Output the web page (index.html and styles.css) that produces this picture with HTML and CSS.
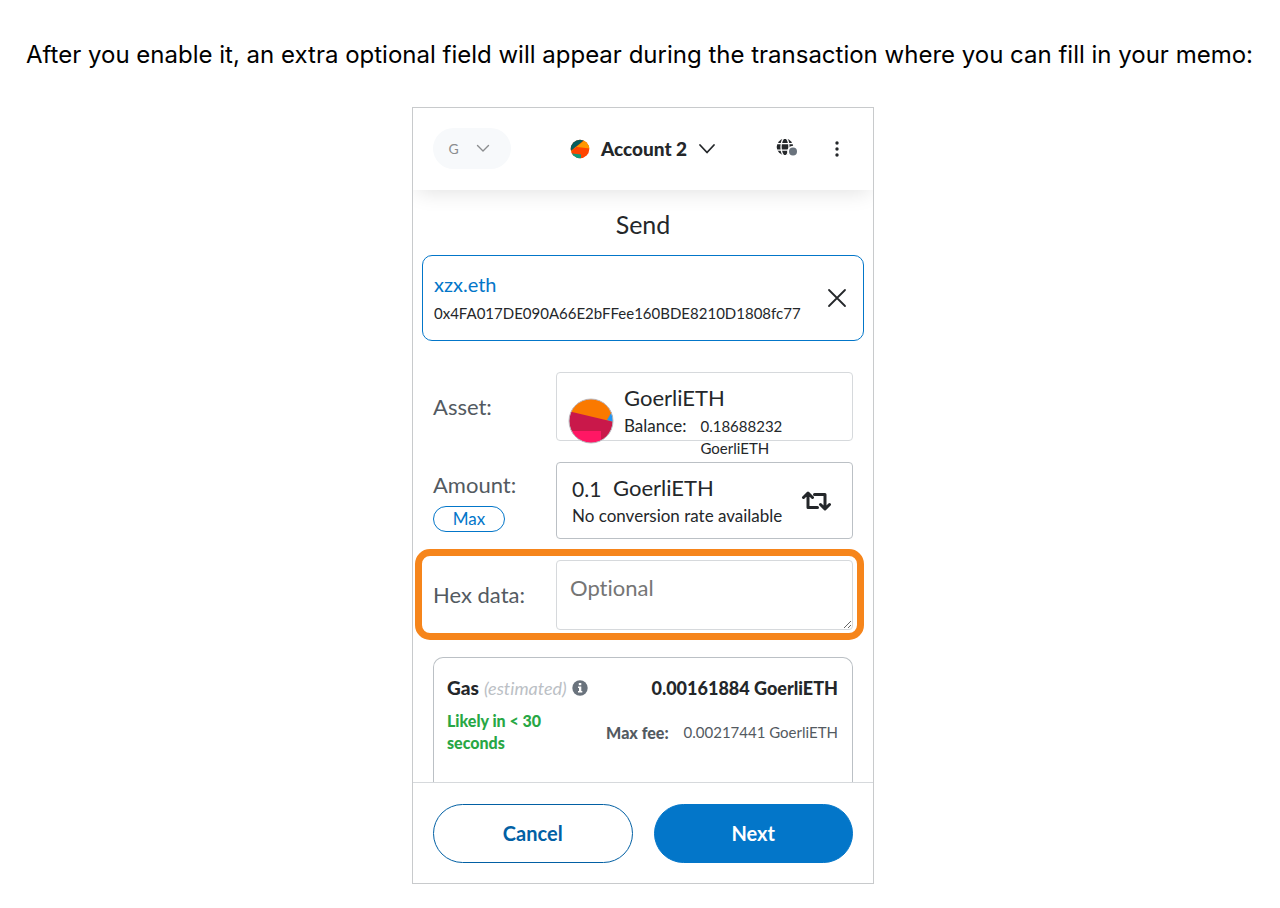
FILE: index.html
```html
<!DOCTYPE html>
<html lang="en">
<head>
<meta charset="utf-8">
<meta name="viewport" content="width=device-width, initial-scale=1">
<title>Send transaction</title>
<link rel="stylesheet" href="styles.css">
</head>
<body>
<main class="page">
  <p class="caption">After you enable it, an extra optional field will appear during the transaction where you can fill in your memo:</p>
  <section class="wallet">
    <header class="topbar">
      <button class="network" type="button" aria-label="Network G"><span>G</span>
        <svg width="14" height="9" viewBox="0 0 14 9" fill="none" stroke="currentColor" stroke-width="1.4" stroke-linecap="round" stroke-linejoin="round"><path d="M1.5 1.5 7 7l5.500-5.500"/></svg>
      </button>
      <button class="account" type="button">
        <svg width="20" height="20" viewBox="0 0 20 20"><defs><clipPath id="avatar"><circle cx="10" cy="10" r="9.300"/></clipPath></defs><g clip-path="url(#avatar)"><path fill="#ff4500" d="M0 0h20v20H0z"/><path fill="#ff9800" d="M0 13 16 0h4v9.500L5 7.800 0 15z"/><path fill="#075e5d" d="M0 0h15.500L0 12.500z"/><path fill="#109b7c" d="m2 14.500 9 1V20H2z"/></g></svg>
        <span>Account 2</span>
        <svg width="18" height="12" viewBox="0 0 18 12" fill="none" stroke="currentColor" stroke-width="1.800" stroke-linecap="round" stroke-linejoin="round"><path d="m2 2 7 7.500L16 2"/></svg>
      </button>
      <div class="actions">
        <button class="icon-button" type="button" aria-label="Connection status">
          <svg width="22" height="20" viewBox="0 0 22 20"><circle cx="9" cy="8" r="8.300" fill="#24272a"/><g fill="none" stroke="#fff" stroke-width="1.300"><ellipse cx="9" cy="8" rx="4" ry="9"/><path d="M0 4.600h18M0 11.200h18"/></g><circle cx="17" cy="12.500" r="5.800" fill="#fff"/><circle cx="17" cy="12.500" r="4" fill="#6a737d"/></svg>
        </button>
        <button class="icon-button" type="button" aria-label="Account options">
          <svg width="6" height="18" viewBox="0 0 6 18" fill="#24272a"><circle cx="3" cy="3" r="1.700"/><circle cx="3" cy="9" r="1.700"/><circle cx="3" cy="15" r="1.700"/></svg>
        </button>
      </div>
    </header>

    <form class="send">
      <h1 class="title">Send</h1>
      <div class="recipient">
        <div class="recipient-text">
          <span class="ens">xzx.eth</span>
          <span class="address">0x4FA017DE090A66E2bFFee160BDE8210D1808fc77</span>
        </div>
        <button class="icon-button" type="button" aria-label="Clear recipient">
          <svg width="20" height="20" viewBox="0 0 20 20" fill="none" stroke="#24272a" stroke-width="1.800" stroke-linecap="round"><path d="m2 2 16 16M18 2 2 18"/></svg>
        </button>
      </div>

      <div class="row asset-row">
        <span class="label">Asset:</span>
        <div class="field asset">
          <svg class="token" width="46" height="46" viewBox="0 0 46 46"><defs><clipPath id="token"><circle cx="23" cy="23" r="22"/></clipPath></defs><g clip-path="url(#token)"><path fill="#c9184a" d="M0 0h46v46H0z"/><path fill="#fa7900" d="M0 0h46v24L0 13z"/><path fill="#2196f3" d="m39 22 7-12v14z"/><path fill="#ff1764" d="M0 33h33v13H0z"/></g><circle cx="23" cy="23" r="22" fill="none" stroke="#bbc0c5"/></svg>
          <div class="asset-text">
            <span class="value">GoerliETH</span>
            <div class="balance"><span class="balance-label">Balance:</span><span>0.18688232 GoerliETH</span></div>
          </div>
        </div>
      </div>

      <div class="row amount-row">
        <div class="label-stack">
          <label class="label" for="amount">Amount:</label>
          <button class="max" type="button">Max</button>
        </div>
        <div class="field amount">
          <div class="amount-text">
            <div class="amount-line"><input id="amount" class="amount-input" type="text" value="0.1"><span class="value">GoerliETH</span></div>
            <span class="rate">No conversion rate available</span>
          </div>
          <button class="icon-button" type="button" aria-label="Swap currency">
            <svg width="30" height="20" viewBox="0 0 30 20" fill="none" stroke="#24272a" stroke-width="3" stroke-linecap="round" stroke-linejoin="round"><path d="M2.500 6.500 7 2l4.500 4.500M7 3v13.500h9.500M13.500 3.500H24V17M19.500 13.500 24 18l4.500-4.500"/></svg>
          </button>
        </div>
      </div>

      <div class="row highlight">
        <label class="label" for="hex">Hex data:</label>
        <textarea id="hex" class="field hex" placeholder="Optional"></textarea>
      </div>

      <div class="gas">
        <div class="gas-title">
          <strong>Gas</strong><em>(estimated)</em>
          <svg width="16" height="16" viewBox="0 0 16 16"><circle cx="8" cy="8" r="7.700" fill="#6a737d"/><path fill="#fff" d="M6.800 2.900h2.500v2.300H6.800zM6 6.400h3.300v4.700h1v1.500H6v-1.500h1V7.900H6z"/></svg>
        </div>
        <strong class="gas-total">0.00161884 GoerliETH</strong>
        <span class="timing">Likely in &lt; 30 seconds</span>
        <div class="max-fee"><strong>Max fee:</strong><span class="fee-value">0.00217441 GoerliETH</span></div>
      </div>

      <footer class="footer">
        <button class="button cancel" type="button">Cancel</button>
        <button class="button next" type="submit">Next</button>
      </footer>
    </form>
  </section>
</main>
</body>
</html>
```

FILE: styles.css
```css
* { box-sizing: border-box; }
body { margin: 0; background: #fff; color: #24272a; font-family: Lato, sans-serif; font-variant-ligatures: none; }
button, input, textarea { font: inherit; color: inherit; font-variant-ligatures: none; }
button { padding: 0; border: 0; background: none; cursor: pointer; }
svg { display: block; flex: none; }

.page { padding: 38px 20px 24px 26px; }
.caption { margin: 0 0 35px; font: 24px/34px Inter, sans-serif; color: #000; }

.wallet { max-width: 462px; margin: 0 auto; border: 1px solid #c8cacc; overflow: hidden; }
.topbar {
  display: grid; grid-template-columns: 1fr auto 1fr; align-items: center;
  padding: 20px 20px 21px; box-shadow: 0 6px 20px -4px #0000001f;
}
.network {
  display: flex; align-items: center; justify-content: center; gap: 17px; justify-self: start;
  width: 78px; height: 41px; padding-right: 6px; border-radius: 21px; background: #f7f9fb; color: #8b8d8f; font-size: 14px;
}
.account { display: flex; align-items: center; gap: 11px; font-size: 19px; font-weight: 900; }
.actions { display: flex; align-items: center; justify-content: flex-end; gap: 36px; padding-right: 13px; }

.title { margin: 0; padding: 17px 0 14px; text-align: center; font-size: 25px; line-height: 34px; font-weight: 400; }
.recipient {
  display: flex; align-items: center; justify-content: space-between;
  min-height: 86px; margin: 0 9px 31px; padding: 8px 16px 8px 11px;
  border: 1px solid #0376c9; border-radius: 10px;
}
.recipient-text { display: grid; gap: 4px; }
.ens { font-size: 20px; line-height: 26px; color: #0376c9; }
.address { font-size: 15px; line-height: 24px; }

.row { display: grid; grid-template-columns: 123px minmax(0, 1fr); align-items: center; margin: 0 20px; }
.label { font-size: 22px; line-height: 30px; color: #535a61; }
.field { border: 1px solid #d6d9dc; border-radius: 4px; }
.value { font-size: 22px; line-height: 30px; }
.asset-row { margin-bottom: 21px; }
.asset { display: flex; gap: 10px; height: 69px; padding: 10px 11px; }
.token { margin-top: 15px; }
.asset-text { flex: 1; }
.balance { display: grid; grid-template-columns: auto 1fr; gap: 14px; margin-top: 2px; padding-right: 50px; font-size: 15px; line-height: 22px; }
.balance-label { font-size: 17px; }

.amount-row { margin-bottom: 10px; }
.label-stack { display: grid; gap: 6px; justify-items: start; }
.max { width: 72px; height: 26px; border: 1px solid #0376c9; border-radius: 13px; color: #0376c9; font-size: 17px; line-height: 20px; }
.amount { display: flex; align-items: center; justify-content: space-between; min-height: 77px; padding: 10px 21px 10px 15px; border-color: #bbc0c5; }
.amount-line { display: flex; gap: 12px; }
.amount-input { width: 29px; height: 30px; padding: 0; border: 0; outline: 0; background: none; font-size: 21px; }
.rate { display: block; font-size: 17px; line-height: 25px; }

.highlight { margin: 0 9px 17px 2px; padding: 4px 4px 3px 11px; border: 7px solid #f6851b; border-radius: 15px; }
.hex { display: block; width: 100%; height: 70px; padding: 12px 13px; background: #fff; font-size: 22px; line-height: 30px; outline: 0; resize: vertical; }
.hex::placeholder { color: #757575; opacity: 1; }

.gas {
  display: grid; grid-template-columns: 130px 1fr; align-content: start; row-gap: 8px;
  height: 125px; margin: 0 20px; padding: 16px 14px 0 13px;
  border: 1px solid #bbc0c5; border-bottom: 0; border-radius: 10px 10px 0 0;
}
.gas-title { display: flex; align-items: center; gap: 5px; font-size: 19px; line-height: 28px; white-space: nowrap; }
.gas-title em { color: #bbc0c5; font-size: 18px; }
.gas strong { font-weight: 900; }
.gas-total { text-align: right; font-size: 18px; line-height: 28px; }
.timing { width: 110px; color: #28a745; font-size: 16px; line-height: 22px; font-weight: 900; }
.max-fee { display: flex; align-items: center; justify-content: flex-end; gap: 15px; color: #535a61; font-size: 16px; }
.fee-value { font-size: 15px; }

.footer { display: grid; grid-template-columns: 1fr 1fr; gap: 21px; padding: 21px 20px 20px; border-top: 1px solid #d6d9dc; }
.button { height: 59px; padding-bottom: 2px; border: 1px solid #0376c9; border-radius: 30px; font-size: 20px; font-weight: 700; }
.cancel { color: #0260a4; border-color: #0260a4; }
.next { background: #0376c9; color: #fff; }
```
